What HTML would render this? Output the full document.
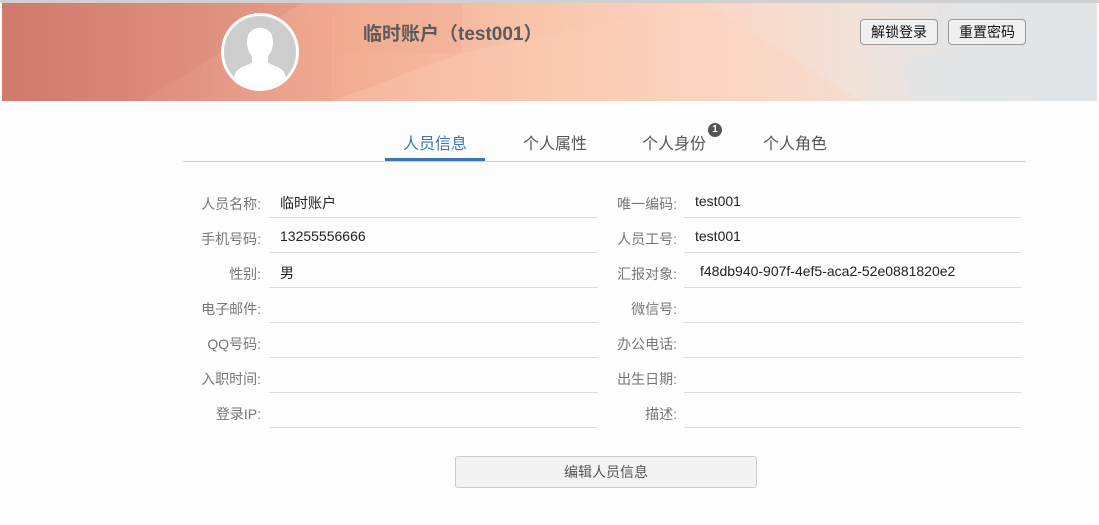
<!DOCTYPE html>
<html><head><meta charset="utf-8"><style>
*{margin:0;padding:0;box-sizing:border-box}
body{width:1099px;height:525px;background:#fdfdfd;font-family:"Liberation Sans","Noto Sans CJK SC",sans-serif;position:relative;overflow:hidden;color:#333}
.top{position:absolute;left:0;top:0;width:1099px;height:3px;background:#d0d0d0}
.banner{position:absolute;left:2px;top:3px;width:1095px;height:98px;overflow:hidden;background:linear-gradient(90deg,#cf786b 0%,#e39583 18%,#f2ad93 32%,#f9c6ad 50%,#fbd6c4 65%,#f1e2da 78%,#e3e5e6 88%,#e2e4e6 100%)}
.av{position:absolute;left:221px;top:13px;width:78px;height:78px;border-radius:50%;background:#cdcdcd;border:3px solid #fff;overflow:hidden}
.vline{position:absolute;left:333px;top:14px;width:1px;height:78px;background:#e3b5a5}
.title{position:absolute;left:363px;top:19px;font-size:19px;font-weight:bold;color:#5b5b5b}
.btn{position:absolute;top:19px;height:26px;border:1px solid #999;border-radius:4px;background:#f0f0f0;font-size:14px;color:#111;text-align:center;line-height:24px;width:78px}
.tabs{position:absolute;left:183px;top:161px;width:843px;height:1px;background:#cfcfcf}
.tab{position:absolute;top:130px;font-size:16px;color:#555;width:100px;text-align:center}
.act{position:absolute;left:385px;top:158px;width:100px;height:3px;background:#3d76b8}
.badge{position:absolute;left:708px;top:123px;width:14px;height:14px;border-radius:50%;background:#555;color:#fff;font-size:10px;font-weight:bold;text-align:center;line-height:14px}
.lb{position:absolute;font-size:14px;color:#777;text-align:right;width:100px}
.vl{position:absolute;font-size:14px;color:#222}
.ul{position:absolute;height:1px;background:#dcdcdc}
.edit{position:absolute;left:455px;top:456px;width:302px;height:32px;border:1px solid #ccc;border-radius:3px;background:#f3f3f3;text-align:center;line-height:30px;font-size:14px;color:#555}
</style></head><body>
<div class="top"></div>
<div class="banner">
<svg width="1095" height="98" style="position:absolute;left:0;top:0">
<polygon points="0,0 300,0 140,98 0,98" fill="#d27b6e" opacity=".25"/>
<polygon points="300,0 460,0 460,50 330,50" fill="#f1a88e" opacity=".35"/>
<polygon points="460,50 700,0 860,98 330,98" fill="#fbd0ba" opacity=".3"/>
<polygon points="900,60 1095,20 1095,98 910,98" fill="#e1e4e6" opacity=".6"/>
</svg>
</div>
<div class="av"><svg width="72" height="72" viewBox="0 0 72 72"><path d="M36 12c-9 0-13 6-13 14 0 6 2 11 5 14v5c0 2-2 3-5 4-8 3-13 6-13 16v7h52v-7c0-10-5-13-13-16-3-1-5-2-5-4v-5c3-3 5-8 5-14 0-8-4-14-13-14z" fill="#fff"/></svg></div>
<div class="vline"></div>
<div class="title">临时账户（test001）</div>
<div class="btn" style="left:860px">解锁登录</div>
<div class="btn" style="left:948px">重置密码</div>

<div class="tab" style="left:385px;color:#3d76b8">人员信息</div>
<div class="tab" style="left:505px">个人属性</div>
<div class="tab" style="left:624px">个人身份</div>
<div class="badge">1</div>
<div class="tab" style="left:745px">个人角色</div>
<div class="tabs"></div>
<div class="act"></div>

<div class="lb" style="left:161px;top:194px">人员名称:</div><div class="vl" style="left:280px;top:193px">临时账户</div><div class="ul" style="left:269px;top:217px;width:329px"></div>
<div class="lb" style="left:161px;top:229px">手机号码:</div><div class="vl" style="left:280px;top:228px">13255556666</div><div class="ul" style="left:269px;top:252px;width:329px"></div>
<div class="lb" style="left:161px;top:264px">性别:</div><div class="vl" style="left:280px;top:263px">男</div><div class="ul" style="left:269px;top:287px;width:329px"></div>
<div class="lb" style="left:161px;top:299px">电子邮件:</div><div class="ul" style="left:269px;top:322px;width:329px"></div>
<div class="lb" style="left:161px;top:334px">QQ号码:</div><div class="ul" style="left:269px;top:357px;width:329px"></div>
<div class="lb" style="left:161px;top:369px">入职时间:</div><div class="ul" style="left:269px;top:392px;width:329px"></div>
<div class="lb" style="left:161px;top:404px">登录IP:</div><div class="ul" style="left:269px;top:427px;width:329px"></div>

<div class="lb" style="left:577px;top:194px">唯一编码:</div><div class="vl" style="left:695px;top:193px">test001</div><div class="ul" style="left:684px;top:217px;width:337px"></div>
<div class="lb" style="left:577px;top:229px">人员工号:</div><div class="vl" style="left:695px;top:228px">test001</div><div class="ul" style="left:684px;top:252px;width:337px"></div>
<div class="lb" style="left:577px;top:264px">汇报对象:</div><div class="vl" style="left:700px;top:263px">f48db940-907f-4ef5-aca2-52e0881820e2</div><div class="ul" style="left:684px;top:287px;width:337px"></div>
<div class="lb" style="left:577px;top:299px">微信号:</div><div class="ul" style="left:684px;top:322px;width:337px"></div>
<div class="lb" style="left:577px;top:334px">办公电话:</div><div class="ul" style="left:684px;top:357px;width:337px"></div>
<div class="lb" style="left:577px;top:369px">出生日期:</div><div class="ul" style="left:684px;top:392px;width:337px"></div>
<div class="lb" style="left:577px;top:404px">描述:</div><div class="ul" style="left:684px;top:427px;width:337px"></div>

<div class="edit">编辑人员信息</div>
</body></html>
